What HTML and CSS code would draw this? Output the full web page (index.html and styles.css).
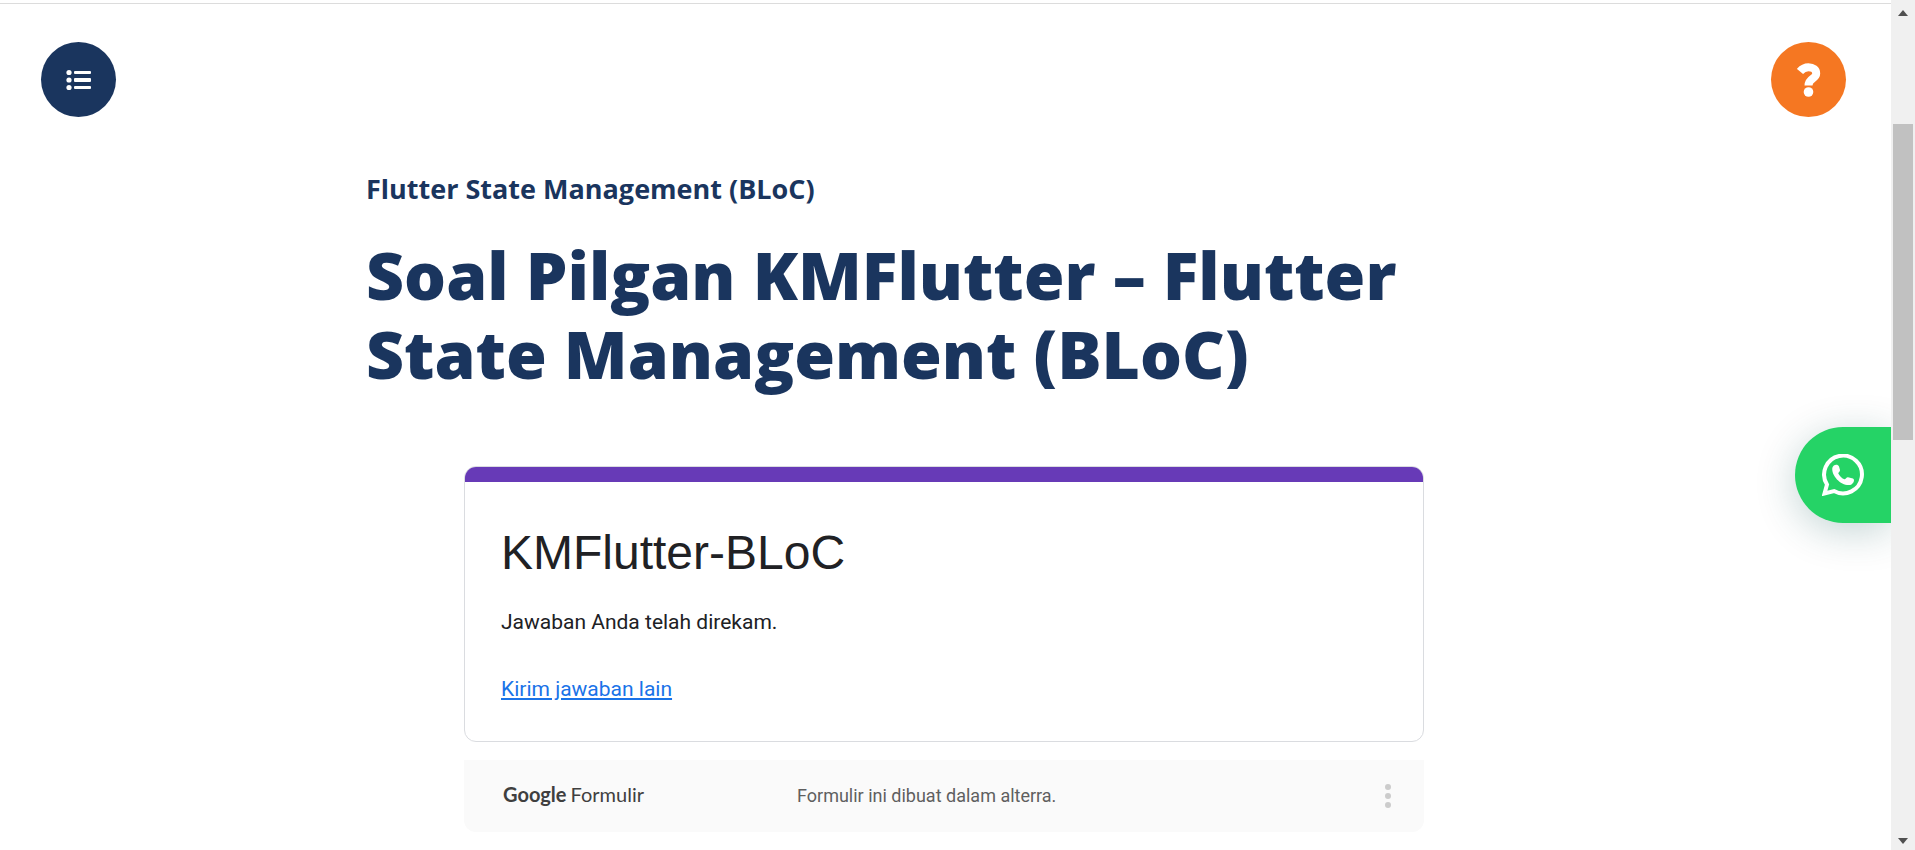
FILE: index.html
```html
<!DOCTYPE html>
<html lang="id">
<head>
<meta charset="utf-8">
<meta name="viewport" content="width=device-width, initial-scale=1">
<title>Soal Pilgan KMFlutter – Flutter State Management (BLoC)</title>
<link rel="stylesheet" href="styles.css">
</head>
<body>
<div class="page">
  <header class="toolbar">
    <button class="round round-menu" type="button" aria-label="Daftar materi">
      <svg width="26" height="22" viewBox="0 0 26 22" fill="#fff" aria-hidden="true">
        <circle cx="3" cy="3.5" r="2.6"/><circle cx="3" cy="11" r="2.6"/><circle cx="3" cy="18.5" r="2.6"/>
        <rect x="8" y="2" width="17" height="3" rx="1"/><rect x="8" y="9" width="17" height="4" rx="1"/><rect x="8" y="17" width="17" height="3" rx="1"/>
      </svg>
    </button>
    <button class="round round-help" type="button" aria-label="Bantuan">
      <svg width="24" height="34" viewBox="0 0 24 34" aria-hidden="true">
        <path d="M3 8.500C5.500 5.500 8 4.300 11.500 4.300C16 4.300 19.200 6.700 19.200 10.500C19.200 16 11.500 15 11.500 22.500" fill="none" stroke="#fff" stroke-width="8"/>
        <circle cx="11.500" cy="29" r="4.800" fill="#fff"/>
      </svg>
    </button>
  </header>
  <main class="content">
    <p class="course">Flutter State Management (BLoC)</p>
    <h1 class="title">Soal Pilgan KMFlutter – Flutter State Management (BLoC)</h1>
    <div class="form">
      <section class="card">
        <h2 class="form-title">KMFlutter-BLoC</h2>
        <p class="message">Jawaban Anda telah direkam.</p>
        <a class="again" href="#">Kirim jawaban lain</a>
      </section>
      <footer class="form-footer">
        <a class="brand" href="#"><b class="brand-google">Google</b><span>Formulir</span></a>
        <p class="origin">Formulir ini dibuat dalam alterra.</p>
        <button class="more" type="button" aria-label="Opsi lainnya">
          <svg width="6" height="24" viewBox="0 0 6 24" fill="#ccc" aria-hidden="true"><circle cx="3" cy="3" r="3"/><circle cx="3" cy="12" r="3"/><circle cx="3" cy="21" r="3"/></svg>
        </button>
      </footer>
    </div>
  </main>
  <a class="whatsapp" href="#" aria-label="WhatsApp">
    <svg width="42" height="42" viewBox="0 0 42 42" aria-hidden="true">
      <path d="M2.500 39.500L5 30.500A18.900 18.900 0 1 1 12 37.100Z" fill="none" stroke="#fff" stroke-width="4"/>
      <path d="M10.300 14C11 10.500 15.800 9.500 17 12.500L18 16C18.300 17.500 16 18.500 16.300 19.500C17.500 22 20 24.500 22.500 25.300C23.500 25.500 24.500 23 26 23.200L31 24.500C33.500 26 31 30.500 28 31C19 32 9.500 22 10.300 14Z" fill="#fff"/>
    </svg>
  </a>
</div>
<div class="scrollbar" aria-hidden="true">
  <svg class="arrow" width="10" height="6" viewBox="0 0 10 6"><path d="M0 6L5 0L10 6Z" fill="#505050"/></svg>
  <div class="track"><div class="thumb"></div></div>
  <svg class="arrow" width="10" height="6" viewBox="0 0 10 6"><path d="M0 0L5 6L10 0Z" fill="#505050"/></svg>
</div>
</body>
</html>
```
FILE: styles.css
```css
* { box-sizing: border-box; }

body {
  margin: 0;
  height: 100vh;
  display: flex;
  overflow: hidden;
  background: #fff;
  color: #1a355e;
  font-family: "Open Sans", sans-serif;
}

h1, h2, p { margin: 0; }

button { padding: 0; border: 0; cursor: pointer; }

.page {
  flex: 1;
  position: relative;
  overflow: hidden;
  padding-top: 3px;
}

.toolbar {
  display: flex;
  justify-content: space-between;
  padding: 38px 45px 0 41px;
  border-top: 1px solid #dcdcdc;
}

.round {
  width: 75px;
  height: 75px;
  border-radius: 50%;
  display: grid;
  place-items: center;
}

.round-menu { background: #1a355e; }
.round-help { background: #f57722; }

.content {
  max-width: 1159px;
  margin: 0 auto;
  padding: 55px 3px 0 0;
}

.course {
  font-size: 27px;
  line-height: 34px;
  font-weight: 700;
}

.title {
  margin-top: 29px;
  font-size: 66px;
  line-height: 79px;
  font-weight: 800;
}

.form {
  max-width: 960px;
  margin: 73px auto 0;
  font-family: Roboto, sans-serif;
}

.card {
  position: relative;
  overflow: hidden;
  padding: 56px 36px 37px;
  border: 1px solid #dadce0;
  border-radius: 12px;
  color: #202124;
}

.card::before {
  content: "";
  position: absolute;
  inset: -1px -1px auto;
  height: 16px;
  background: #673ab7;
}

.form-title {
  font-family: "Liberation Sans", sans-serif;
  font-size: 48px;
  line-height: 60px;
  font-weight: 400;
}

.message {
  margin: 24px 0 37px;
  font-size: 21px;
  line-height: 30px;
}

.again {
  display: inline-block;
  color: #1a73e8;
  font-size: 21px;
  line-height: 30px;
}

.form-footer {
  display: grid;
  grid-template-columns: 294px 1fr auto;
  align-items: center;
  height: 72px;
  margin-top: 18px;
  padding: 0 33px 0 39px;
  border-radius: 0 0 12px 12px;
  background: #fafafa;
}

.brand {
  display: flex;
  gap: 4px;
  padding-bottom: 4px;
  color: #3f3f3f;
  font-family: Lato, sans-serif;
  font-size: 20px;
  text-decoration: none;
}

.brand-google { font-weight: 700; }

.origin {
  color: #5f5f5f;
  font-size: 18px;
  line-height: 24px;
}

.more { display: grid; background: none; }

.whatsapp {
  position: absolute;
  top: 427px;
  right: 0;
  width: 96px;
  height: 96px;
  padding-left: 27px;
  display: grid;
  align-items: center;
  border-radius: 48px 0 0 48px;
  background: #25d366;
  box-shadow: 0 8px 40px rgba(0, 77, 77, 0.24);
}

.scrollbar {
  flex: none;
  width: 24px;
  display: flex;
  flex-direction: column;
  align-items: center;
  padding: 10px 0 6px;
  background: #f0f0f0;
}

.track { flex: 1; width: 20px; padding-top: 108px; }
.thumb { height: 39%; min-height: 316px; background: #c1c1c1; }
```
